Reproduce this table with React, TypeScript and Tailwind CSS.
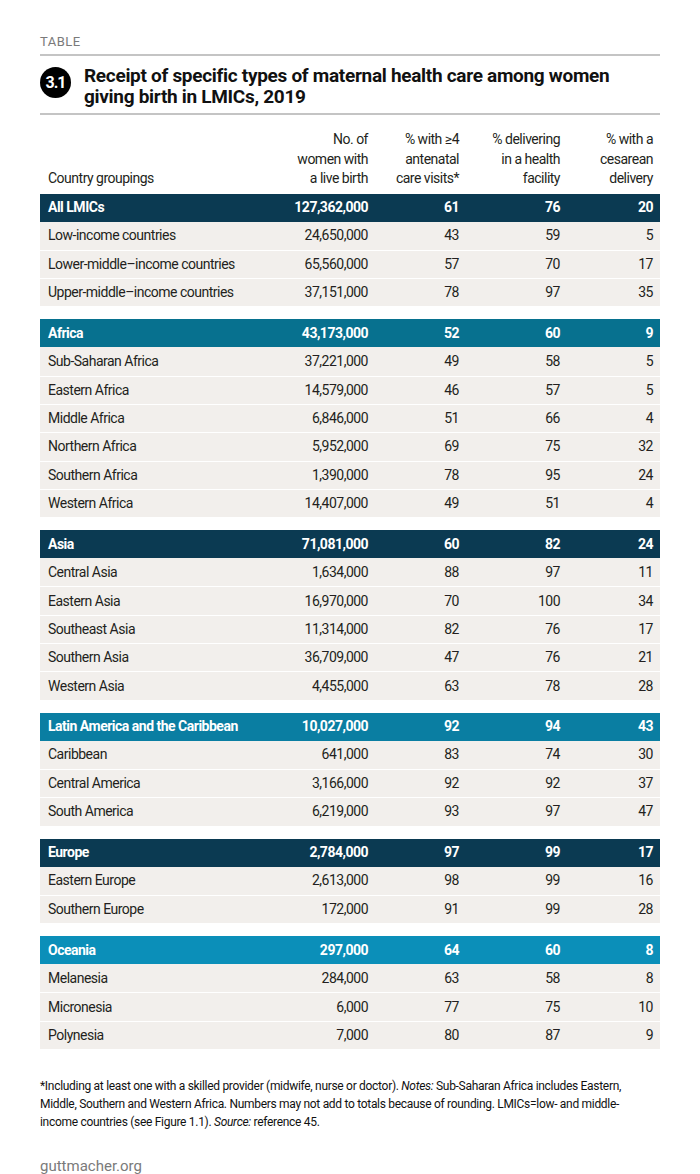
import React from 'react';

type Row = [string, string, string, string, string];

interface Group {
    head: Row;
    tone: string;
    rows: Row[];
}

const groups: Group[] = [
    {
        head: ['All LMICs', '127,362,000', '61', '76', '20'],
        tone: 'bg-[#0b3a52]',
        rows: [
            ['Low-income countries', '24,650,000', '43', '59', '5'],
            ['Lower-middle–income countries', '65,560,000', '57', '70', '17'],
            ['Upper-middle–income countries', '37,151,000', '78', '97', '35'],
        ],
    },
    {
        head: ['Africa', '43,173,000', '52', '60', '9'],
        tone: 'bg-[#07718f]',
        rows: [
            ['Sub-Saharan Africa', '37,221,000', '49', '58', '5'],
            ['Eastern Africa', '14,579,000', '46', '57', '5'],
            ['Middle Africa', '6,846,000', '51', '66', '4'],
            ['Northern Africa', '5,952,000', '69', '75', '32'],
            ['Southern Africa', '1,390,000', '78', '95', '24'],
            ['Western Africa', '14,407,000', '49', '51', '4'],
        ],
    },
    {
        head: ['Asia', '71,081,000', '60', '82', '24'],
        tone: 'bg-[#0b3a52]',
        rows: [
            ['Central Asia', '1,634,000', '88', '97', '11'],
            ['Eastern Asia', '16,970,000', '70', '100', '34'],
            ['Southeast Asia', '11,314,000', '82', '76', '17'],
            ['Southern Asia', '36,709,000', '47', '76', '21'],
            ['Western Asia', '4,455,000', '63', '78', '28'],
        ],
    },
    {
        head: ['Latin America and the Caribbean', '10,027,000', '92', '94', '43'],
        tone: 'bg-[#0a7ea2]',
        rows: [
            ['Caribbean', '641,000', '83', '74', '30'],
            ['Central America', '3,166,000', '92', '92', '37'],
            ['South America', '6,219,000', '93', '97', '47'],
        ],
    },
    {
        head: ['Europe', '2,784,000', '97', '99', '17'],
        tone: 'bg-[#0b3a52]',
        rows: [
            ['Eastern Europe', '2,613,000', '98', '99', '16'],
            ['Southern Europe', '172,000', '91', '99', '28'],
        ],
    },
    {
        head: ['Oceania', '297,000', '64', '60', '8'],
        tone: 'bg-[#0b8fb9]',
        rows: [
            ['Melanesia', '284,000', '63', '58', '8'],
            ['Micronesia', '6,000', '77', '75', '10'],
            ['Polynesia', '7,000', '80', '87', '9'],
        ],
    },
];

const cols = 'grid grid-cols-[215px_120px_91px_101px_93px]';

const Cells = ({ row }: { row: Row }) => (
    <>
        <div className="pl-2 whitespace-nowrap">{row[0]}</div>
        {row.slice(1).map((v, i) => (
            <div key={i} className="pr-[7px] text-right">{v}</div>
        ))}
    </>
);

const App = () => {
    return (
        <div className="w-[700px] h-[1174px] bg-white px-10 pt-[34px] text-[#231f20] font-['Roboto','Liberation_Sans',sans-serif]">
            {/* Label + title */}
            <div className="text-[13px] leading-4 tracking-[0.5px] text-[#7a7a7a]">TABLE</div>
            <div className="mt-[4px] h-[2px] bg-[#c4c4c4]" />
            <div className="flex items-start gap-[13px] pt-[9px] pb-[6px]">
                <div className="mt-[2px] w-[31px] h-[31px] shrink-0 rounded-full bg-black text-white flex items-center justify-center text-[16px] font-bold tracking-[-1px]">
                    3.1
                </div>
                <h1 className="text-[19px] leading-[21px] font-bold tracking-[-0.3px] text-[#111]">
                    Receipt of specific types of maternal health care among women
                    <br />
                    giving birth in LMICs, 2019
                </h1>
            </div>
            <div className="h-[2px] bg-[#c4c4c4]" />

            {/* Column headings */}
            <div className={`${cols} items-end pt-[15px] pb-[5px] text-[14px] leading-[19.5px] tracking-[-0.5px]`}>
                <div className="pl-2">Country groupings</div>
                <div className="pr-[7px] text-right">No. of<br />women with<br />a live birth</div>
                <div className="pr-[7px] text-right">% with ≥4<br />antenatal<br />care visits*</div>
                <div className="pr-[7px] text-right">% delivering<br />in a health<br />facility</div>
                <div className="pr-[7px] text-right">% with a<br />cesarean<br />delivery</div>
            </div>

            {/* Body */}
            <div className="flex flex-col gap-[13px] text-[14px] tracking-[-0.5px]">
                {groups.map((g) => (
                    <div key={g.head[0]}>
                        <div className={`${cols} ${g.tone} h-[28px] items-center font-bold text-white`}>
                            <Cells row={g.head} />
                        </div>
                        {g.rows.map((r, i) => (
                            <div
                                key={r[0]}
                                className={`${cols} h-[28.3px] items-center bg-[#f2efec] ${i > 0 ? 'border-t border-white' : ''}`}
                            >
                                <Cells row={r} />
                            </div>
                        ))}
                    </div>
                ))}
            </div>

            {/* Notes */}
            <p className="mt-[28px] text-[12px] leading-[18px] tracking-[-0.3px] text-[#111] whitespace-nowrap">
                *Including at least one with a skilled provider (midwife, nurse or doctor). <i>Notes:</i> Sub-Saharan Africa includes Eastern,
                <br />
                Middle, Southern and Western Africa. Numbers may not add to totals because of rounding. LMICs=low- and middle-
                <br />
                income countries (see Figure 1.1). <i>Source:</i> reference 45.
            </p>
            <div className="mt-[24px] text-[15px] text-[#7a7a7a]">guttmacher.org</div>
        </div>
    );
};

export default App;
